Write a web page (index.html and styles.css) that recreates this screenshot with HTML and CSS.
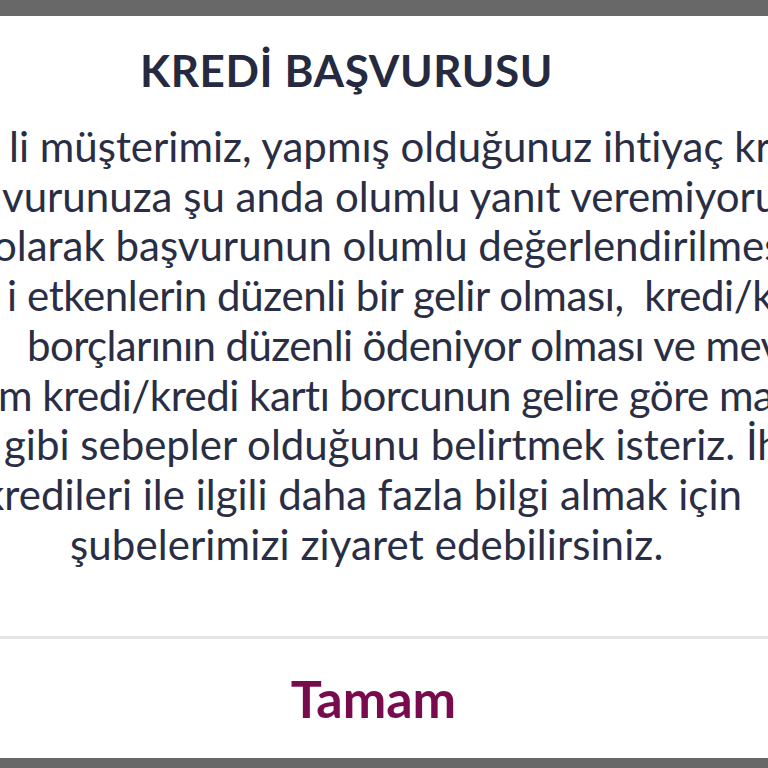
FILE: index.html
```html
<!DOCTYPE html>
<html lang="tr">
<head>
<meta charset="utf-8">
<title>Kredi Başvurusu</title>
<link rel="stylesheet" href="styles.css">
</head>
<body>
<div class="backdrop">
  <div class="dialog">
    <h1 class="title">KREDİ BAŞVURUSU</h1>
    <div class="message">
      <div class="line l1">li müşterimiz, yapmış olduğunuz ihtiyaç kredi</div>
      <div class="line l2">vurunuza şu anda olumlu yanıt veremiyoruz.</div>
      <div class="line l3">olarak başvurunun olumlu değerlendirilmesini</div>
      <div class="line l4">i etkenlerin düzenli bir gelir olması,&nbsp; kredi/kredi</div>
      <div class="line l5">borçlarının düzenli ödeniyor olması ve mevcut</div>
      <div class="line l6">m kredi/kredi kartı borcunun gelire göre makul</div>
      <div class="line l7">gibi sebepler olduğunu belirtmek isteriz. İhtiyaç</div>
      <div class="line l8">kredileri ile ilgili daha fazla bilgi almak için</div>
      <div class="line l9">şubelerimizi ziyaret edebilirsiniz.</div>
    </div>
    <div class="actions">
      <button class="ok" type="button">Tamam</button>
    </div>
  </div>
</div>
</body>
</html>
```

FILE: styles.css
```css
html, body {
  margin: 0;
  padding: 0;
  width: 768px;
  height: 768px;
  overflow: hidden;
}

body {
  font-family: "Lato", "Noto Sans", "DejaVu Sans", sans-serif;
  font-variant-ligatures: none;
  background: #686868;
}

.backdrop {
  width: 768px;
  height: 768px;
  padding-top: 16px;
  box-sizing: border-box;
}

.dialog {
  background: #ffffff;
  height: 742px;
  display: flex;
  flex-direction: column;
  overflow: hidden;
}

.title {
  margin: 0;
  padding: 28px 75px 0 0;
  text-align: center;
  font-size: 44px;
  font-weight: 700;
  letter-spacing: 0.6px;
  line-height: 52.8px;
  color: #262a40;
}

.message {
  margin: 25px 0 66px 0;
  font-size: 42px;
  line-height: 49.75px;
  color: #2a2e44;
}

.line {
  white-space: nowrap;
}

.l1 { margin-left: 9px; }
.l2 { margin-left: 2px; }
.l3 { margin-left: -7px; }
.l4 { margin-left: 7px; letter-spacing: -0.4px; }
.l5 { margin-left: 27px; letter-spacing: -0.6px; }
.l6 { margin-left: -2px; letter-spacing: -0.5px; }
.l7 { margin-left: 4px; }
.l8 { margin-left: -17px; }
.l9 { margin-left: 70px; letter-spacing: 0.1px; }

.actions {
  flex: 1;
  border-top: 3px solid #e4e4e6;
  display: flex;
  align-items: center;
  justify-content: center;
  padding-right: 21px;
}

.ok {
  border: none;
  background: transparent;
  padding: 0;
  font-family: "Lato", "Noto Sans", sans-serif;
  font-size: 52px;
  font-weight: 700;
  color: #780b4e;
  line-height: 1.2;
}
```
